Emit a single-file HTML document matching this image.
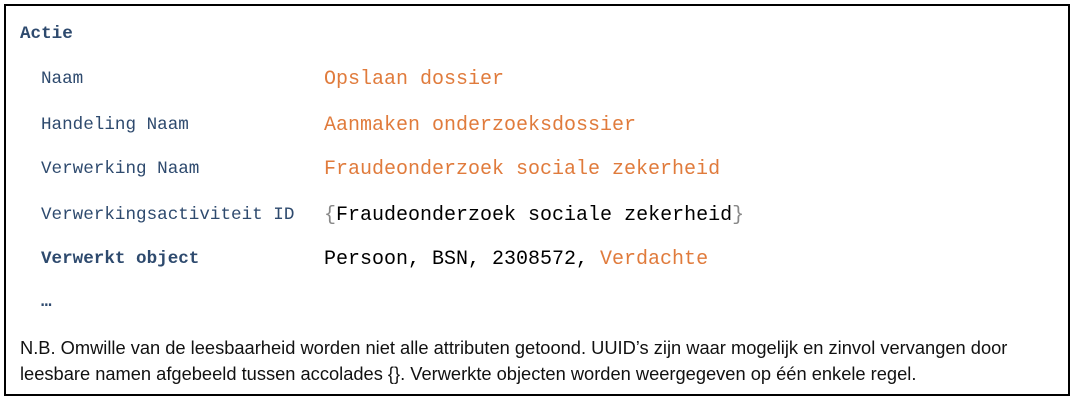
<!DOCTYPE html>
<html><head><meta charset="utf-8"><style>
body{margin:0;width:1074px;height:400px;background:#fff;overflow:hidden;position:relative}
.box{position:absolute;left:4px;top:4px;width:1062px;height:388px;border:2px solid #000}
.t{position:absolute;white-space:nowrap;font-family:"Courier New","Liberation Mono",monospace;line-height:1}
.l{color:#2e4a6e;font-size:17.6px}
.v{font-size:20px;color:#e07b3c}
.k{color:#000}
.g{color:#888}
.b{font-weight:bold}
.f{position:absolute;left:20px;font-family:"Liberation Sans",sans-serif;font-size:18.3px;color:#111;white-space:nowrap;line-height:1}
</style></head><body>
<div class="box"></div>
<div class="t l b" style="left:20px;top:26px">Actie</div>
<div class="t l" style="left:41px;top:71px">Naam</div>
<div class="t v" style="left:324px;top:70px">Opslaan dossier</div>
<div class="t l" style="left:41px;top:117px">Handeling Naam</div>
<div class="t v" style="left:324px;top:116px">Aanmaken onderzoeksdossier</div>
<div class="t l" style="left:41px;top:161px">Verwerking Naam</div>
<div class="t v" style="left:324px;top:160px">Fraudeonderzoek sociale zekerheid</div>
<div class="t l" style="left:41px;top:207px">Verwerkingsactiviteit ID</div>
<div class="t v k" style="left:324px;top:206px"><span class="g">{</span>Fraudeonderzoek sociale zekerheid<span class="g">}</span></div>
<div class="t l b" style="left:41px;top:251px">Verwerkt object</div>
<div class="t v k" style="left:324px;top:250px">Persoon, BSN, 2308572, <span style="color:#e07b3c">Verdachte</span></div>
<div class="t l b" style="left:41px;top:294px">…</div>
<div class="f" style="top:339px">N.B. Omwille van de leesbaarheid worden niet alle attributen getoond. UUID’s zijn waar mogelijk en zinvol vervangen door</div>
<div class="f" style="top:365px">leesbare namen afgebeeld tussen accolades {}. Verwerkte objecten worden weergegeven op één enkele regel.</div>
</body></html>
